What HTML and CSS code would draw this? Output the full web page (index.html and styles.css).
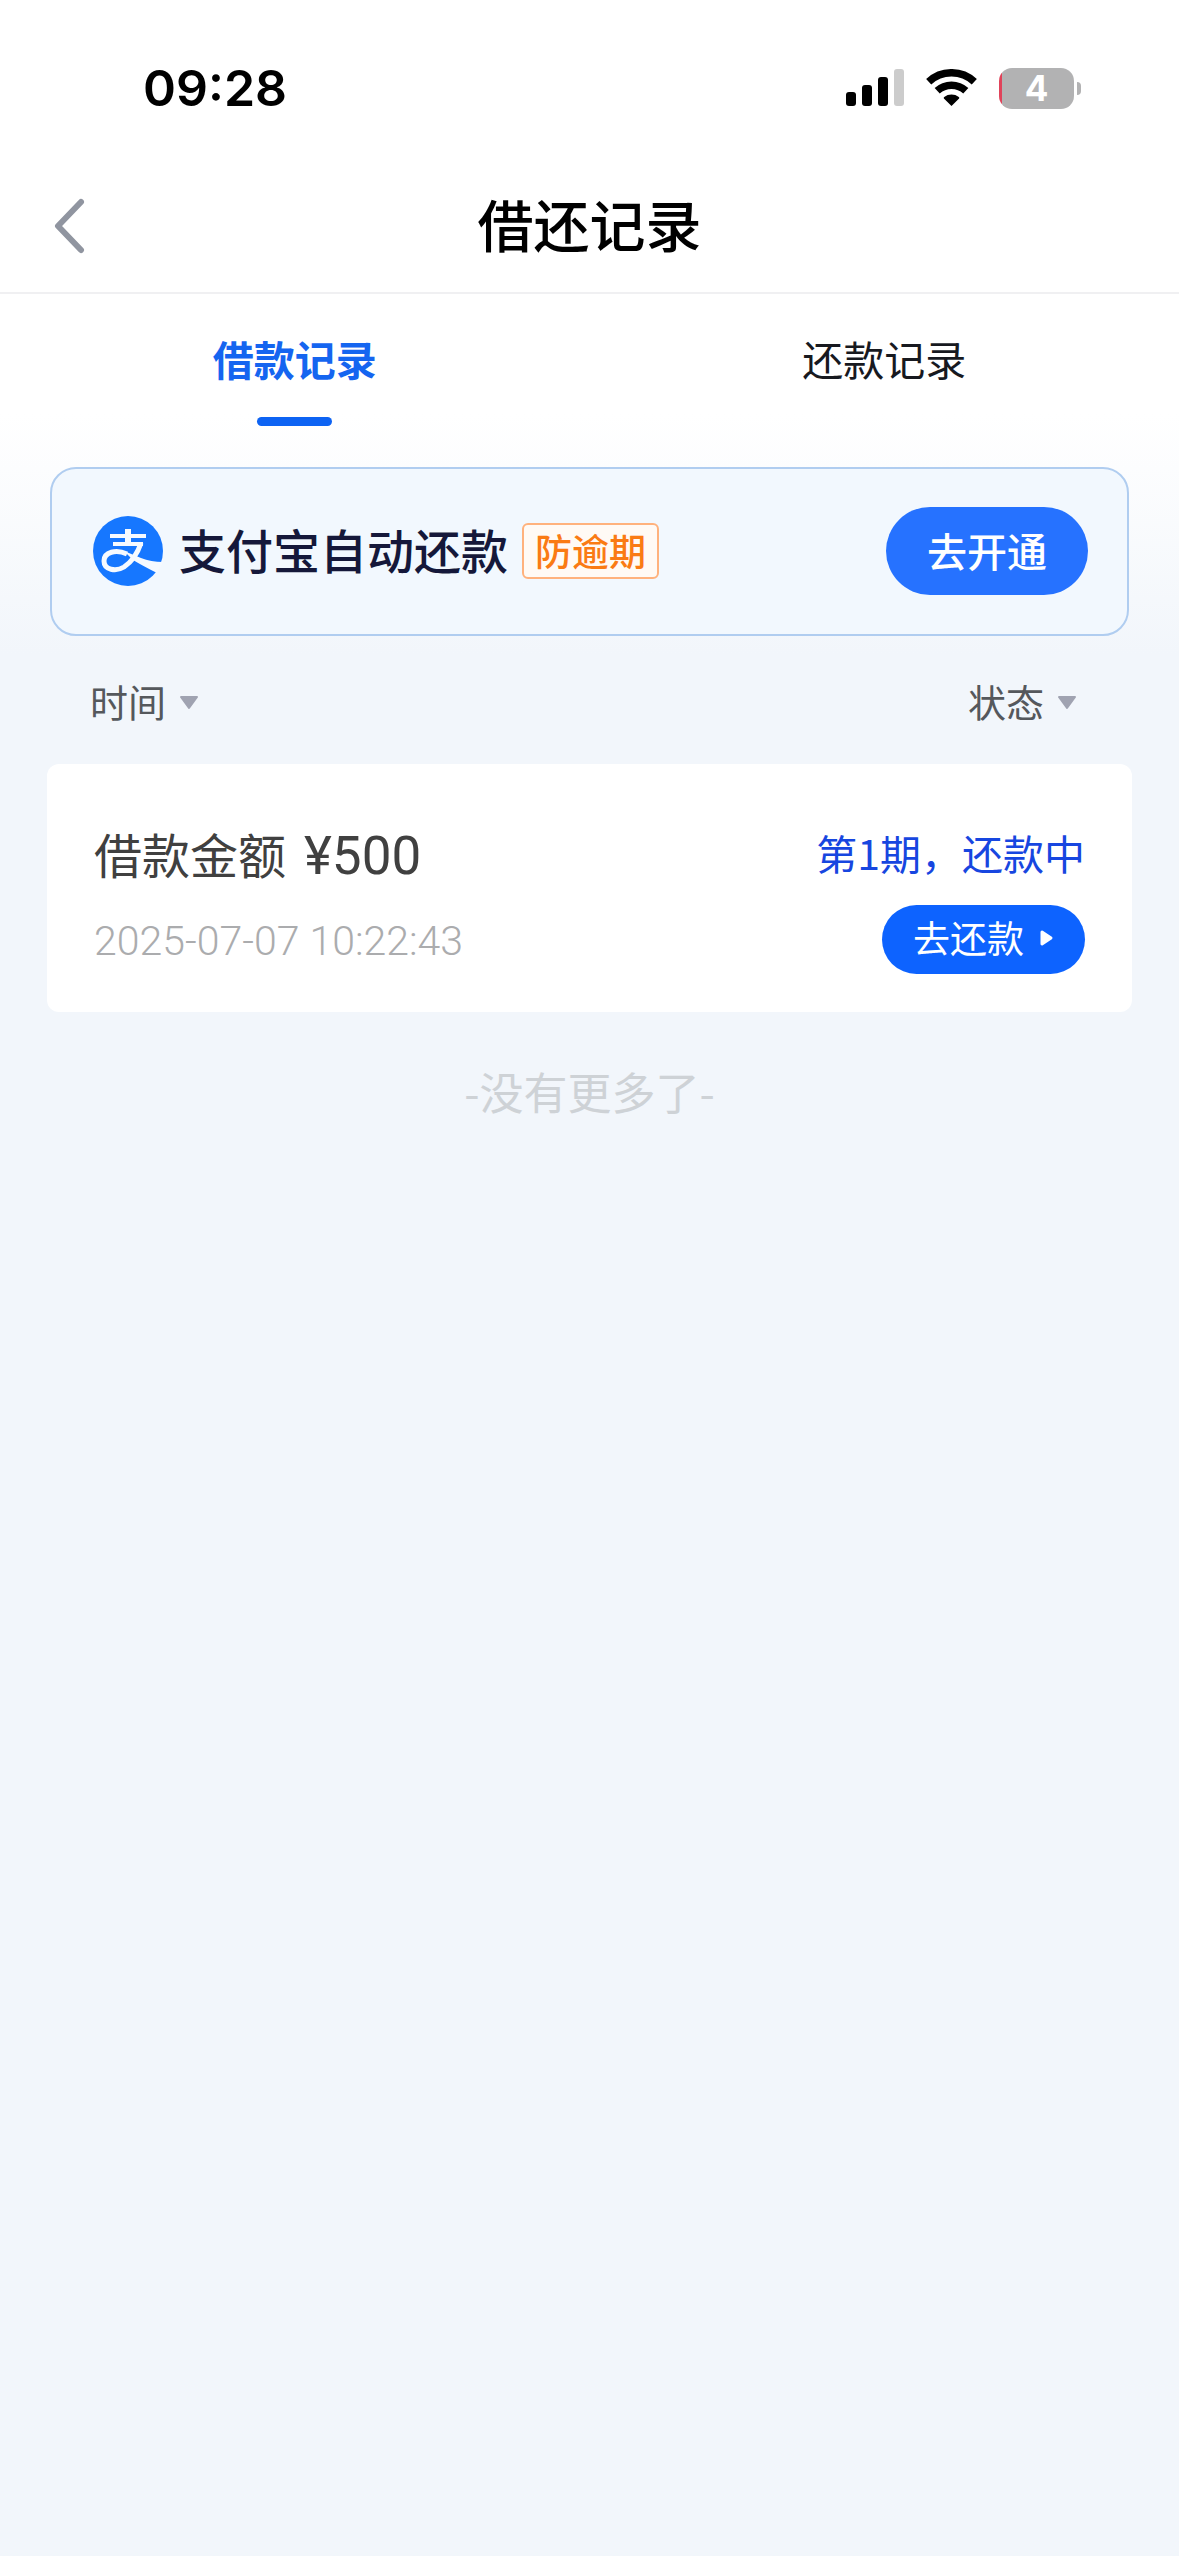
FILE: index.html
```html
<!DOCTYPE html>
<html lang="zh-CN">
  <head>
    <meta charset="UTF-8" />
    <meta name="viewport" content="width=device-width, initial-scale=1.0" />
    <title>借还记录</title>
    <link rel="stylesheet" href="styles.css">
  </head>
  <body>
    <div class="status-bar">
      <span class="time">09:28</span>
      <div class="status-icons">
        <svg class="signal" width="58" height="38" viewBox="0 0 58 38">
          <rect x="0" y="23" width="10" height="14" rx="3" />
          <rect x="16" y="16" width="10" height="21" rx="3" />
          <rect x="32" y="8" width="10" height="29" rx="3" />
          <rect x="48" y="0" width="10" height="37" rx="3" fill="#cccccc" />
        </svg>
        <svg class="wifi" width="51" height="38" viewBox="0 0 51 38">
          <path d="M2.7 12.7A33.5 33.5 0 0 1 48.3 12.7" fill="none" stroke="#000" stroke-width="7.5" />
          <path d="M11.2 21.8A21 21 0 0 1 39.8 21.8" fill="none" stroke="#000" stroke-width="7.5" />
          <path d="M25.5 37L17.9 29.5Q17.3 28.6 18.2 28A12 12 0 0 1 32.8 28Q33.7 28.6 33.1 29.5Z" />
        </svg>
        <div class="battery"><span class="battery-body">4</span><span class="battery-cap"></span></div>
      </div>
    </div>

    <header class="nav">
      <button class="back" aria-label="返回">
        <svg width="32" height="56" viewBox="0 0 32 56">
          <path d="M27 4L4 28L27 52" fill="none" stroke="#9095a0" stroke-width="6" stroke-linecap="round" stroke-linejoin="round" />
        </svg>
      </button>
      <h1>借还记录</h1>
    </header>

    <main>
      <div class="tabs" role="tablist">
        <button class="tab active" role="tab" aria-selected="true">借款记录</button>
        <button class="tab" role="tab" aria-selected="false">还款记录</button>
      </div>

      <section class="banner">
        <svg class="logo" width="70" height="70" viewBox="0 0 70 70">
          <circle cx="35" cy="35" r="35" fill="#1677ff" />
          <g fill="none" stroke="#f6faff" stroke-width="4">
            <path d="M35 13V28" stroke-width="6" />
            <path d="M17 20H53" />
            <path d="M20 28H50" />
            <path d="M48 27C44 39 37 47 31 51C23 56 11 54 11 45C11 36 23 33 34 38" stroke-width="5" />
          </g>
          <path d="M31 35L48 42Q58 46 70 46L64 57Q50 50 40 44Z" fill="#f6faff" />
        </svg>
        <h2>支付宝自动还款</h2>
        <span class="tag">防逾期</span>
        <button class="open-btn">去开通</button>
      </section>

      <div class="filters">
        <label class="filter">
          <select aria-label="时间">
            <option>时间</option>
          </select>
          <svg width="20" height="17" viewBox="0 0 20 17">
            <path d="M2 4H18L10 15Z" fill="#a0a3b1" stroke="#a0a3b1" stroke-width="2" stroke-linejoin="round" />
          </svg>
        </label>
        <label class="filter">
          <select aria-label="状态">
            <option>状态</option>
          </select>
          <svg width="20" height="17" viewBox="0 0 20 17">
            <path d="M2 4H18L10 15Z" fill="#a0a3b1" stroke="#a0a3b1" stroke-width="2" stroke-linejoin="round" />
          </svg>
        </label>
      </div>

      <article class="record">
        <p class="amount">借款金额<span>¥500</span></p>
        <p class="state">第1期，还款中</p>
        <time class="date" datetime="2025-07-07T10:22:43">2025-07-07 10:22:43</time>
        <button class="repay-btn">
          去还款
          <svg width="14" height="18" viewBox="0 0 14 18">
            <path d="M2 3L11 9L2 15Z" fill="#fff" stroke="#fff" stroke-width="3" stroke-linejoin="round" />
          </svg>
        </button>
      </article>

      <p class="no-more">-没有更多了-</p>
    </main>
  </body>
</html>
```
FILE: styles.css
```css
* {
  box-sizing: border-box;
}

body {
  margin: 0;
  min-height: 100vh;
  background: #f2f6fb;
  color: #000;
  font-family: "Noto Sans CJK SC", sans-serif;
}

h1,
h2,
p {
  margin: 0;
}

button,
select {
  border: none;
  padding: 0;
  background: transparent;
  color: inherit;
  font-family: inherit;
  cursor: pointer;
}

svg {
  display: block;
}

/* status bar */
.status-bar {
  display: flex;
  justify-content: space-between;
  align-items: center;
  padding: 52px 98px 36px 143px;
  background: #fff;
}

.time {
  font-family: Inter, sans-serif;
  font-size: 50px;
  font-weight: 600;
  line-height: 72px;
}

.status-icons {
  display: flex;
  align-items: center;
  gap: 22px;
}

.battery {
  display: flex;
  align-items: center;
  gap: 3px;
}

.battery-body {
  width: 75px;
  border-radius: 13px;
  background: linear-gradient(to right, #e0435a 3px, #b2b2b3 3px);
  color: #fff;
  font-family: Inter, sans-serif;
  font-size: 35px;
  font-weight: 700;
  line-height: 41px;
  text-align: center;
}

.battery-cap {
  width: 4px;
  height: 13px;
  border-radius: 0 4px 4px 0;
  background: #b2b2b3;
}

/* title */
.nav {
  display: grid;
  grid-template-columns: 1fr auto 1fr;
  align-items: center;
  padding: 26px 54px;
  border-bottom: 2px solid #f0f0f2;
  background: #fff;
}

.nav h1 {
  padding-bottom: 6px;
  font-size: 56px;
  font-weight: 500;
  line-height: 74px;
}

.back {
  justify-self: start;
}

main {
  background: linear-gradient(#fff 120px, #f2f6fb 360px);
}

.tabs {
  display: grid;
  grid-template-columns: 1fr 1fr;
}

.tab {
  padding-top: 34px;
  color: #17191f;
  font-size: 41px;
  line-height: 60px;
}

.tab::after {
  content: "";
  display: block;
  width: 75px;
  height: 9px;
  margin: 29px auto 0;
  border-radius: 5px;
}

.tab.active {
  color: #1565f0;
  font-weight: 700;
}

.tab.active::after {
  background: #0d63f3;
}

/* auto repay banner */
.banner {
  display: flex;
  align-items: center;
  margin: 41px 50px 0;
  padding: 38px 39px 39px 41px;
  border: 2px solid #b0cdf0;
  border-radius: 26px;
  background: #f2f8fe;
}

.banner h2 {
  margin-left: 16px;
  padding-bottom: 4px;
  color: #15183a;
  font-size: 47px;
  font-weight: 500;
  line-height: 60px;
}

.tag {
  margin-left: 14px;
  padding: 0 11px 2px;
  border: 2px solid #ffb27d;
  border-radius: 6px;
  background: #fffaf5;
  color: #fa7b14;
  font-size: 37px;
  font-weight: 500;
  line-height: 50px;
}

.open-btn {
  margin-left: auto;
  padding: 0 41px 2px;
  border-radius: 44px;
  background: #2672ff;
  color: #fff;
  font-size: 40px;
  font-weight: 500;
  line-height: 86px;
}

/* filters */
.filters {
  display: flex;
  justify-content: space-between;
  padding: 35px 102px 33px 90px;
}

.filter {
  display: flex;
  align-items: center;
  gap: 12px;
  color: #55585c;
}

.filter select {
  appearance: none;
  font-size: 38px;
  line-height: 60px;
}

/* record card */
.record {
  display: grid;
  grid-template-columns: 1fr auto;
  row-gap: 14px;
  margin: 0 47px;
  padding: 52px 47px 38px;
  border-radius: 12px;
  background: #fff;
}

.amount {
  display: flex;
  align-items: baseline;
  gap: 18px;
  color: #404040;
  font-size: 48px;
  line-height: 75px;
}

.amount span {
  font-family: Roboto, sans-serif;
  font-size: 53px;
  line-height: 60px;
}

.state {
  color: #1746e0;
  font-size: 41px;
  line-height: 73px;
}

.date {
  padding-top: 4px;
  color: #abacae;
  font-family: Roboto, sans-serif;
  font-size: 41px;
  font-weight: 300;
  line-height: 65px;
}

.repay-btn {
  display: flex;
  justify-self: end;
  align-items: center;
  gap: 16px;
  padding: 0 31px 4px;
  border-radius: 35px;
  background: #0d63ff;
  color: #fff;
  font-size: 37px;
  line-height: 65px;
}

.no-more {
  padding: 49px 0;
  color: #ced2d6;
  font-size: 44px;
  line-height: 60px;
  text-align: center;
}
```
